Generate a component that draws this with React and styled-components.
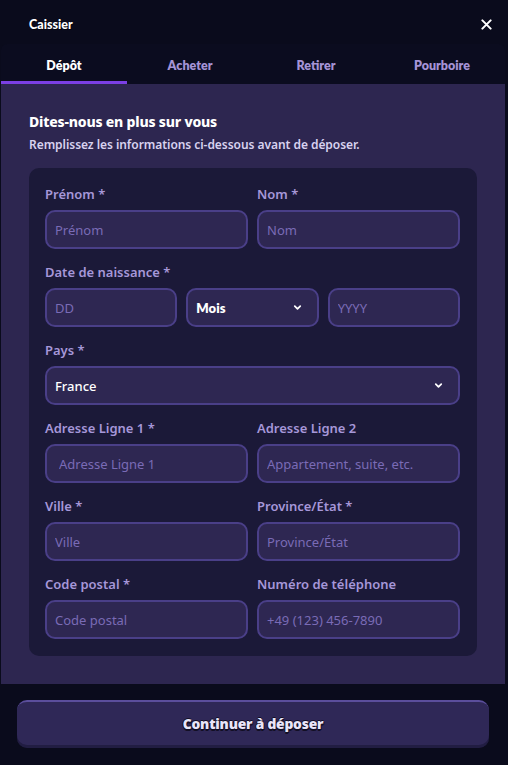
import React from "react";
import styled, { createGlobalStyle } from "styled-components";

const Global = createGlobalStyle`
  html, body { margin: 0; padding: 0; background: #0a0b1c; }
  body { font-family: "Noto Sans", "Open Sans", sans-serif; }
  * { box-sizing: border-box; }
`;

const Modal = styled.div`
  width: 508px;
  height: 765px;
  background: #0a0b1c;
  display: flex;
  flex-direction: column;
  overflow: hidden;
`;

const Header = styled.div`
  flex-shrink: 0;
  height: 44px;
  display: flex;
  align-items: center;
  justify-content: space-between;
  padding: 4px 15px 0 29px;
`;

const Title = styled.div`
  color: #fff;
  font-family: "Lato", sans-serif;
  font-weight: 900;
  font-size: 12.5px;
  text-shadow: 1px 1px 0 rgba(0, 0, 0, 0.5);
`;

const Close = styled.button`
  background: none;
  border: 0;
  padding: 0;
  width: 14px;
  height: 14px;
  display: flex;
  align-items: center;
  justify-content: center;
  cursor: pointer;
`;

const Body = styled.div`
  flex-shrink: 0;
  width: 504px;
  margin-left: 1px;
  display: flex;
  flex-direction: column;
`;

const Tabs = styled.div`
  display: grid;
  grid-template-columns: repeat(4, 1fr);
  height: 40px;
  background: #0b0c1f;
  border-radius: 6px 6px 0 0;
`;

const Tab = styled.div`
  display: flex;
  align-items: center;
  justify-content: center;
  padding-top: 5px;
  font-family: "Lato", sans-serif;
  font-weight: 800;
  font-size: 12.5px;
  color: ${(p) => (p.$active ? "#ffffff" : "#a593d6")};
  border-bottom: 3px solid ${(p) => (p.$active ? "#7b3fe4" : "transparent")};
`;

const Panel = styled.div`
  background: #2d2650;
  padding: 29px 28px 28px;
  display: flex;
  flex-direction: column;
`;

const Heading = styled.div`
  font-family: "Noto Sans", sans-serif;
  font-weight: 800;
  font-size: 14px;
  line-height: 18px;
  color: #fff;
  letter-spacing: -0.2px;
`;

const Sub = styled.div`
  margin-top: 6px;
  font-family: "Noto Sans", sans-serif;
  font-weight: 600;
  font-size: 12px;
  line-height: 16px;
  color: #d8d2ef;
  letter-spacing: -0.05px;
`;

const Card = styled.div`
  margin-top: 15px;
  background: #1b1938;
  border-radius: 10px;
  padding: 16px 17px 17px 16px;
  display: grid;
  grid-template-columns: 1fr 1fr;
  column-gap: 9px;
  row-gap: 13px;
`;

const Field = styled.div`
  display: flex;
  flex-direction: column;
  gap: 7px;
  grid-column: ${(p) => (p.$full ? "1 / -1" : "auto")};
`;

const Label = styled.div`
  font-size: 13px;
  line-height: 18px;
  font-weight: 600;
  color: #a697d9;
  margin-top: 1px;
`;

const Input = styled.input`
  height: 39px;
  width: 100%;
  border-radius: 10px;
  border: 2px solid #4a3f88;
  background: #2e2752;
  padding: 0 0 0 ${(p) => p.$pad || 8}px;
  font-family: "Noto Sans", sans-serif;
  font-size: 13px;
  color: #fff;
  outline: none;
  &::placeholder { color: #7a6bb6; opacity: 1; }
`;

const Triple = styled.div`
  display: grid;
  grid-template-columns: 1fr 1fr 1fr;
  gap: 9px;
`;

const Select = styled.div`
  height: 39px;
  border-radius: 10px;
  border: 2px solid #4a3f88;
  background: #2e2752;
  display: flex;
  align-items: center;
  justify-content: space-between;
  padding: 0 14px 0 8px;
  color: #fff;
  font-size: 13px;
  font-weight: ${(p) => (p.$bold ? 800 : 500)};
  font-family: ${(p) => (p.$bold ? '"Lato", sans-serif' : '"Noto Sans", sans-serif')};
`;

const Footer = styled.div`
  padding: 16px 16px;
`;

const Button = styled.button`
  width: 100%;
  height: 48px;
  border-radius: 10px;
  border: 0;
  border-top: 2px solid #5b4e9c;
  background: #2f2857;
  box-shadow: inset 0 -3px 0 rgba(10, 8, 30, 0.35);
  padding: 0 0 4px;
  font-family: "Noto Sans", sans-serif;
  font-weight: 900;
  font-size: 13.8px;
  letter-spacing: -0.2px;
  color: #e9e5f8;
  text-shadow: 1px 1px 0 #120f25, -1px 0 0 #120f25, 0 -1px 0 #120f25, 0 2px 0 #120f25;
  cursor: pointer;
`;

const Chevron = () => (
  <svg width="11" height="11" viewBox="0 0 24 24" fill="none" stroke="#fff" strokeWidth="3.8" strokeLinecap="round" strokeLinejoin="round">
    <path d="M6 9l6 6 6-6" />
  </svg>
);

export default function App() {
  return (
    <>
      <Global />
      <Modal>
        <Header>
          <Title>Caissier</Title>
          <Close aria-label="close">
            <svg width="11" height="11" viewBox="0 0 12 12" stroke="#fff" strokeWidth="2.2" strokeLinecap="round">
              <path d="M1.5 1.5l9 9M10.5 1.5l-9 9" />
            </svg>
          </Close>
        </Header>
        <Body>
          <Tabs>
            <Tab $active>Dépôt</Tab>
            <Tab>Acheter</Tab>
            <Tab>Retirer</Tab>
            <Tab>Pourboire</Tab>
          </Tabs>
          <Panel>
            <Heading>Dites-nous en plus sur vous</Heading>
            <Sub>Remplissez les informations ci-dessous avant de déposer.</Sub>
            <Card>
              <Field>
                <Label>Prénom *</Label>
                <Input placeholder="Prénom" />
              </Field>
              <Field>
                <Label>Nom *</Label>
                <Input placeholder="Nom" />
              </Field>
              <Field $full>
                <Label>Date de naissance *</Label>
                <Triple>
                  <Input placeholder="DD" />
                  <Select $bold>
                    Mois <Chevron />
                  </Select>
                  <Input placeholder="YYYY" />
                </Triple>
              </Field>
              <Field $full>
                <Label>Pays *</Label>
                <Select>
                  France <Chevron />
                </Select>
              </Field>
              <Field>
                <Label>Adresse Ligne 1 *</Label>
                <Input placeholder="Adresse Ligne 1" $pad={12} />
              </Field>
              <Field>
                <Label>Adresse Ligne 2</Label>
                <Input placeholder="Appartement, suite, etc." />
              </Field>
              <Field>
                <Label>Ville *</Label>
                <Input placeholder="Ville" />
              </Field>
              <Field>
                <Label>Province/État *</Label>
                <Input placeholder="Province/État" />
              </Field>
              <Field>
                <Label>Code postal *</Label>
                <Input placeholder="Code postal" />
              </Field>
              <Field>
                <Label>Numéro de téléphone</Label>
                <Input placeholder="+49 (123) 456-7890" />
              </Field>
            </Card>
          </Panel>
          <Footer>
            <Button>Continuer à déposer</Button>
          </Footer>
        </Body>
      </Modal>
    </>
  );
}
